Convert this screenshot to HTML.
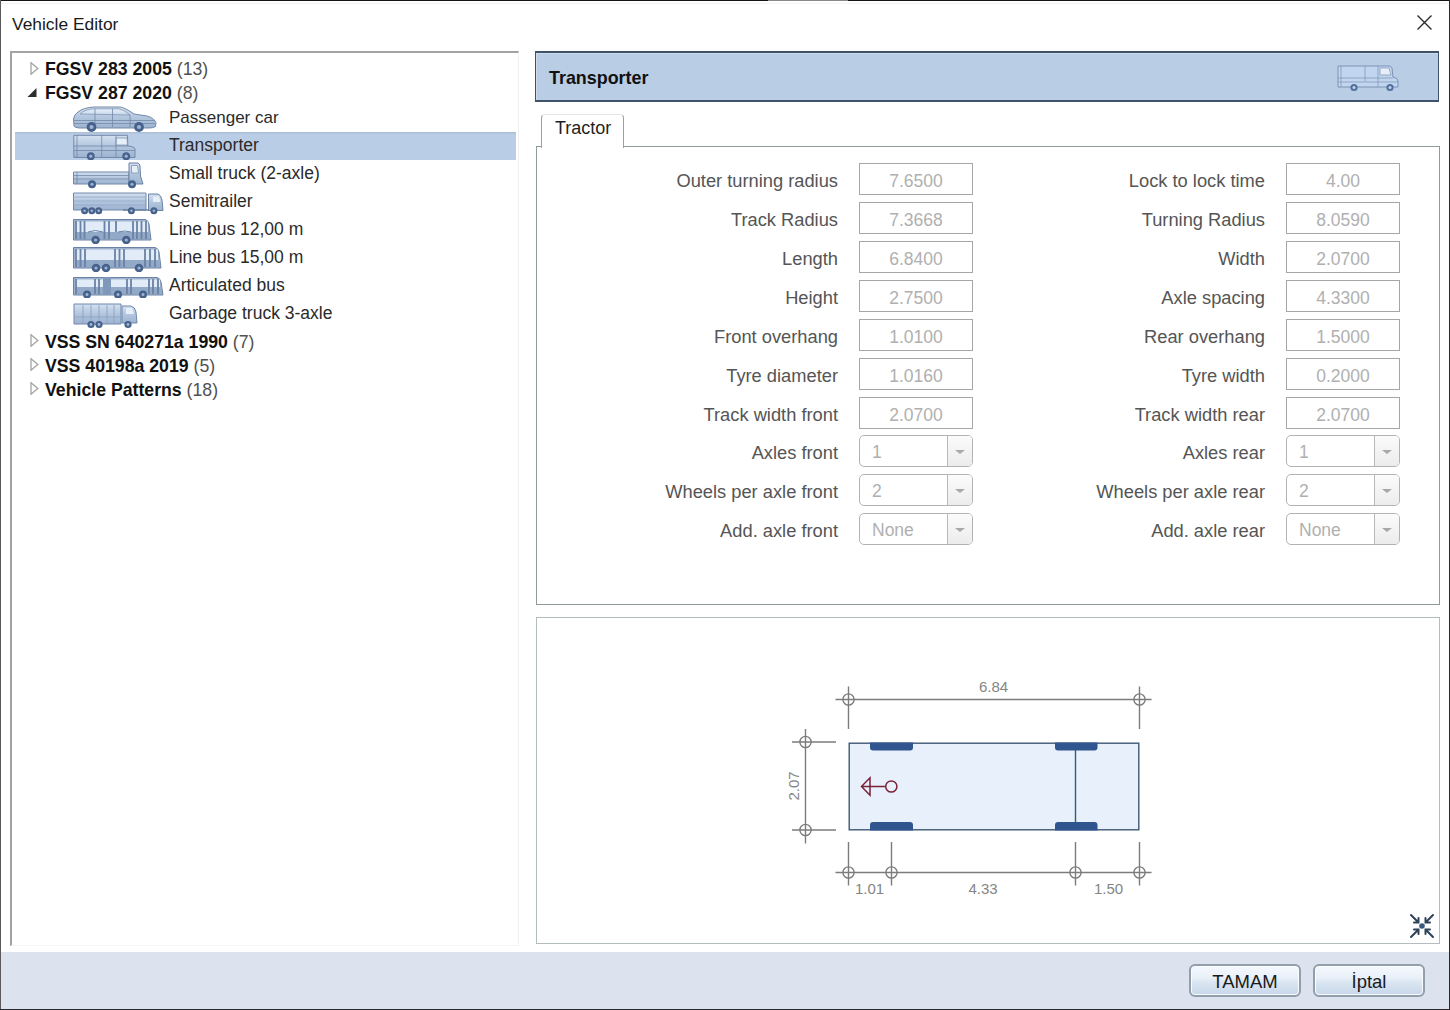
<!DOCTYPE html>
<html><head><meta charset="utf-8">
<style>
html,body{margin:0;padding:0;width:1450px;height:1010px;overflow:hidden;background:#fff;}
body{position:relative;font-family:"Liberation Sans",sans-serif;color:#3a3a3a;}
.a{position:absolute;}
.t{position:absolute;white-space:nowrap;font-size:18px;line-height:22px;}
#frame-top{left:0;top:0;width:1450px;height:1px;background:#151515;}
#frame-left{left:0;top:0;width:1px;height:1010px;background:#5a5a5a;}
#frame-right{left:1449px;top:0;width:1px;height:1010px;background:#2a2a2a;}
#frame-bottom{left:0;top:1009px;width:1450px;height:1px;background:#2a2a2e;}
#title{left:12px;top:13px;font-size:17.4px;color:#1a1a1a;}
#tree{left:10px;top:51px;width:506px;height:892px;border-top:2px solid #a3a3a3;border-left:2px solid #a3a3a3;border-right:1px solid #f0f0f0;border-bottom:1px solid #f6f6f0;}
.ex{position:absolute;}
.grp{position:absolute;left:45px;font-size:17.7px;font-weight:bold;color:#111;white-space:nowrap;line-height:22px;}
.grp span{font-weight:normal;color:#505050;}
.item{position:absolute;left:169px;font-size:17.5px;color:#2a2a2a;white-space:nowrap;line-height:22px;}
#sel{left:15px;top:132px;width:501px;height:28px;background:#bacde6;box-shadow:inset 0 1.5px 0 #adc0d5;}
#hdr{left:535px;top:51px;width:902px;height:47px;border:2px solid #3e5268;border-left-width:1.5px;border-right-width:1.5px;background:#b9cde5;box-shadow:inset 1px 1px 0 #cfdcec;}
#hdr-t{left:549px;top:67px;font-size:17.9px;font-weight:bold;color:#111;}
#tab{left:541px;top:114px;width:81px;height:33px;border:1.3px solid #9aa0a0;border-top-color:#e4e6e6;border-bottom:none;border-radius:4px 4px 0 0;background:#fff;}
#tab-t{left:555px;top:116.5px;font-size:18px;color:#1f1f1f;}
#panel{left:536px;top:146px;width:902px;height:457px;border:1.3px solid #8f9a9a;background:#fff;}
#draw{left:536px;top:617px;width:902px;height:325px;border:1.3px solid #b3bdbd;background:#fff;}
#bar{left:1px;top:952px;width:1448px;height:57px;background:#dce2ee;}
.lbl{position:absolute;font-size:18.3px;color:#555;white-space:nowrap;text-align:right;line-height:22px;}
.fld{position:absolute;width:112px;height:30px;border:1.3px solid #a6a6a6;background:#fff;}
.fld span{position:absolute;left:0;right:0;top:6px;text-align:center;font-size:17.5px;color:#b0b0b0;line-height:22px;}
.cmb{position:absolute;width:112px;height:30px;border:1.3px solid #b3b3b3;border-radius:5px;background:#fff;overflow:hidden;}
.cmb span{position:absolute;left:12px;top:5px;font-size:17.5px;color:#b0b0b0;line-height:22px;}
.cmb i{position:absolute;right:0;top:0;width:24px;height:30px;border-left:1.3px solid #b8b8b8;background:linear-gradient(#fbfbfb,#ececec);}
.cmb i:after{content:"";position:absolute;left:7px;top:14px;border-left:5px solid transparent;border-right:5px solid transparent;border-top:4px solid #a8a8a8;}
.btn{position:absolute;width:108px;height:29px;border:2px solid #939eab;border-radius:6px;background:linear-gradient(#f5f9fd 0%,#e9f0f8 40%,#d8e4f1 60%,#c7d7ea 100%);box-shadow:inset 0 0 0 1px #f8fbff;}
.btn span{position:absolute;left:0;right:0;top:5px;text-align:center;font-size:18.5px;color:#1a1a1a;line-height:22px;}
</style></head>
<body>
<div class="a" id="frame-top"></div>
<div class="a" style="left:1px;top:3px;width:1447px;height:1px;background:#f3f3f3"></div>
<div class="a" style="left:768px;top:0;width:80px;height:1px;background:#8a8a8a"></div>
<div class="a" id="frame-left"></div>
<div class="a" id="frame-right"></div>
<div class="a" id="frame-bottom"></div>

<div class="t" id="title">Vehicle Editor</div>
<svg class="a" style="left:1417px;top:15px" width="15" height="15" viewBox="0 0 15 15"><path d="M0.5 0.5L14.5 14.5M14.5 0.5L0.5 14.5" stroke="#2b2b2b" stroke-width="1.4"/></svg>

<div class="a" id="tree"></div>
<div class="a" id="sel"></div>
<svg width="0" height="0" style="position:absolute"><defs>
<linearGradient id="gb" x1="0" y1="0" x2="0" y2="1"><stop offset="0" stop-color="#d3e0f0"/><stop offset="0.5" stop-color="#b3c6de"/><stop offset="1" stop-color="#9db3d0"/></linearGradient>
<linearGradient id="gw" x1="0" y1="0" x2="0" y2="1"><stop offset="0" stop-color="#e8f0fa"/><stop offset="1" stop-color="#c6d6ea"/></linearGradient>
</defs></svg>
<!-- car -->
<svg class="a" style="left:73px;top:106px" width="84" height="26" viewBox="0 0 84 26">
<path d="M1 20 L0.5 13 Q1 8.5 5 6 Q10 1.5 22 1 L47 1 Q52 1.5 61 8 L74 10 Q81 12 83 16.5 L82.5 20.5 Q80 22 76 22 L6 22 Q1.5 21.5 1 20Z" fill="url(#gb)" stroke="#7289a9" stroke-width="1"/>
<path d="M7 8 Q12 3 22 2.8 L46 2.8 Q51 3.5 57 9 Z" fill="url(#gw)" stroke="#8197b5" stroke-width="0.8"/>
<path d="M22 2.8 V21 M39.5 2.8 V21 M57 9 V21 M1 14.5 H82 M1 17.5 H82" stroke="#7289a9" stroke-width="0.8" fill="none"/>
<circle cx="18.5" cy="21" r="4.9" fill="#46628c"/><circle cx="18.5" cy="21" r="2.1" fill="#9fb4d2"/>
<circle cx="66" cy="21" r="4.9" fill="#46628c"/><circle cx="66" cy="21" r="2.1" fill="#9fb4d2"/>
</svg>
<!-- van -->
<svg class="a" style="left:73px;top:134px" width="63" height="27" viewBox="0 0 63 27">
<path d="M0.8 1.3 L54.5 1.3 L54.8 12 Q61.5 12.5 62 15 L62 23.5 L0.8 23.5 Z" fill="url(#gb)" stroke="#7289a9" stroke-width="1"/>
<path d="M43 4 L54 4 L54.5 11 L43 11 Z" fill="#e6eef8" stroke="#7289a9" stroke-width="0.7"/>
<path d="M4 1.3 V23 M28.7 1.3 V23 M43 1.3 V23 M0.8 12 H55 M0.8 16.5 H62" stroke="#7289a9" stroke-width="0.8" fill="none"/>
<circle cx="17.8" cy="22.2" r="3.9" fill="#46628c"/><circle cx="17.8" cy="22.2" r="1.6" fill="#9fb4d2"/>
<circle cx="53.2" cy="22.2" r="3.9" fill="#46628c"/><circle cx="53.2" cy="22.2" r="1.6" fill="#9fb4d2"/>
</svg>
<!-- small truck -->
<svg class="a" style="left:73px;top:162px" width="71" height="27" viewBox="0 0 71 27">
<path d="M0.5 10 L56 10 L56 22 L0.5 22 Z" fill="url(#gb)" stroke="#7289a9" stroke-width="1"/>
<path d="M56 1 L65 1 Q66.5 1.5 67 4 L67.5 14 L70 22 L56 22 Z" fill="url(#gb)" stroke="#6a82a4" stroke-width="1"/>
<path d="M58.5 3.5 L64.5 3.5 L65.5 11 L58.5 11 Z" fill="#e6eef8" stroke="#7289a9" stroke-width="0.7"/>
<path d="M0.5 13.5 H56 M0.5 17 H56 M4 10 V22" stroke="#7289a9" stroke-width="0.8"/>
<circle cx="19" cy="22.2" r="4" fill="#46628c"/><circle cx="19" cy="22.2" r="1.5" fill="#9fb4d2"/>
<circle cx="59" cy="22.2" r="4" fill="#46628c"/><circle cx="59" cy="22.2" r="1.5" fill="#9fb4d2"/>
</svg>
<!-- semitrailer -->
<svg class="a" style="left:73px;top:192px" width="91" height="23" viewBox="0 0 91 23">
<path d="M0.5 1 L73 1 L73 18 L0.5 18 Z" fill="url(#gb)" stroke="#7289a9" stroke-width="1"/>
<path d="M0.5 5 H73 M0.5 9 H73 M0.5 13 H73" stroke="#8ea4c3" stroke-width="0.7"/>
<path d="M75.5 2 L85 2 Q88 3 89 8 L90 18.5 L75.5 18.5 Z" fill="url(#gb)" stroke="#6a82a4" stroke-width="1"/>
<path d="M80 4.5 L86 4.5 L87.5 10 L80 10 Z" fill="#e6eef8"/>
<path d="M50 18 H76" stroke="#6a82a4" stroke-width="1.5"/>
<circle cx="11.6" cy="18.8" r="3.5" fill="#46628c"/><circle cx="18.8" cy="18.8" r="3.5" fill="#46628c"/><circle cx="25.7" cy="18.8" r="3.5" fill="#46628c"/>
<circle cx="58.4" cy="18.8" r="3.5" fill="#46628c"/><circle cx="80.9" cy="18.8" r="3.5" fill="#46628c"/>
<circle cx="11.6" cy="18.8" r="1.3" fill="#9fb4d2"/><circle cx="18.8" cy="18.8" r="1.3" fill="#9fb4d2"/><circle cx="25.7" cy="18.8" r="1.3" fill="#9fb4d2"/><circle cx="58.4" cy="18.8" r="1.3" fill="#9fb4d2"/><circle cx="80.9" cy="18.8" r="1.3" fill="#9fb4d2"/>
</svg>
<!-- bus 12 -->
<svg class="a" style="left:73px;top:218px" width="79" height="26" viewBox="0 0 79 26">
<path d="M0.5 1.5 L72 1.5 Q75 2 76 6 L78 22 L0.5 22 Z" fill="#9fb3cf" stroke="#6a82a4" stroke-width="1"/>
<path d="M2 3.5 H75 V14 H2 Z" fill="#e2ecf8"/>
<path d="M2 14 H77 V21 H2Z" fill="#93a9c8"/>
<path d="M3 3 V21 M7.5 3 V21 M11.5 3 V21 M31.5 3 V21 M36 3 V21 M43 3 V14 M60 3 V21 M64 3 V21 M68.5 3 V21 M73 3 V21" stroke="#6a82a4" stroke-width="1.8"/>
<path d="M15 14 Q22 11 30 14 M45 14 Q52 12 58 14" stroke="#6a82a4" stroke-width="1" fill="none"/>
<circle cx="22.6" cy="22" r="4.3" fill="#46628c"/><circle cx="22.6" cy="22" r="1.6" fill="#9fb4d2"/>
<circle cx="53.3" cy="22" r="4.3" fill="#46628c"/><circle cx="53.3" cy="22" r="1.6" fill="#9fb4d2"/>
</svg>
<!-- bus 15 -->
<svg class="a" style="left:73px;top:246px" width="89" height="26" viewBox="0 0 89 26">
<path d="M0.5 1.5 L82 1.5 Q85 2 86 6 L88 22 L0.5 22 Z" fill="#9fb3cf" stroke="#6a82a4" stroke-width="1"/>
<path d="M2 3.5 H85 V14 H2 Z" fill="#e2ecf8"/>
<path d="M2 14 H87 V21 H2Z" fill="#93a9c8"/>
<path d="M3 3 V21 M7.5 3 V21 M12 3 V21 M42 3 V21 M46.5 3 V21 M51 3 V21 M72 3 V21 M77 3 V21 M82 3 V21" stroke="#6a82a4" stroke-width="1.8"/>
<circle cx="23" cy="22" r="4.3" fill="#46628c"/><circle cx="23" cy="22" r="1.6" fill="#9fb4d2"/>
<circle cx="33" cy="22" r="4.3" fill="#46628c"/><circle cx="33" cy="22" r="1.6" fill="#9fb4d2"/>
<circle cx="66" cy="22" r="4.3" fill="#46628c"/><circle cx="66" cy="22" r="1.6" fill="#9fb4d2"/>
</svg>
<!-- articulated -->
<svg class="a" style="left:73px;top:276px" width="91" height="22" viewBox="0 0 91 22">
<path d="M0.5 1.5 L84 1.5 Q87 2 88 6 L90 19 L0.5 19 Z" fill="#9fb3cf" stroke="#6a82a4" stroke-width="1"/>
<path d="M2 3.5 H87 V11 H2 Z" fill="#e2ecf8"/>
<path d="M2 11 H89 V18 H2Z" fill="#93a9c8"/>
<path d="M3 3 V18 M22 3 V18 M26 3 V18 M54 3 V18 M58 3 V18 M76 3 V18 M80 3 V18 M85 3 V18" stroke="#6a82a4" stroke-width="1.8"/>
<rect x="30" y="1" width="8" height="18" fill="#7f97b9"/>
<circle cx="14" cy="18.5" r="4" fill="#46628c"/><circle cx="14" cy="18.5" r="1.5" fill="#9fb4d2"/>
<circle cx="45" cy="18.5" r="4" fill="#46628c"/><circle cx="45" cy="18.5" r="1.5" fill="#9fb4d2"/>
<circle cx="70" cy="18.5" r="4" fill="#46628c"/><circle cx="70" cy="18.5" r="1.5" fill="#9fb4d2"/>
</svg>
<!-- garbage -->
<svg class="a" style="left:73px;top:302px" width="65" height="27" viewBox="0 0 65 27">
<path d="M1 2 L48 2 L48 22 L1 22 Z" fill="url(#gb)" stroke="#6f89ad" stroke-width="1"/>
<path d="M10 3 V21 M18 3 V21 M26 3 V21 M34 3 V21 M41 3 V21 M1 15 H48" stroke="#8ea4c3" stroke-width="0.9"/>
<path d="M49 4 L58 4 Q62 5 63 10 L64 21 L49 21 Z" fill="url(#gb)" stroke="#6f89ad" stroke-width="1"/>
<path d="M53 6 L59 6 L61 12 L53 12 Z" fill="#e6eef8"/>
<circle cx="18" cy="22.5" r="3.6" fill="#46628c"/><circle cx="18" cy="22.5" r="1.4" fill="#9fb4d2"/>
<circle cx="26" cy="22.5" r="3.6" fill="#46628c"/><circle cx="26" cy="22.5" r="1.4" fill="#9fb4d2"/>
<circle cx="55" cy="22.5" r="3.6" fill="#46628c"/><circle cx="55" cy="22.5" r="1.4" fill="#9fb4d2"/>
</svg>


<svg class="a" style="left:30px;top:62px" width="9" height="13" viewBox="0 0 9 13"><path d="M1 0.8L7.8 6.5L1 12.2Z" fill="none" stroke="#a2a2a2" stroke-width="1.3"/></svg>
<div class="grp" style="top:58px">FGSV 283 2005 <span>(13)</span></div>
<svg class="a" style="left:27px;top:87px" width="11" height="11" viewBox="0 0 11 11"><path d="M0.5 10L9.5 1V10Z" fill="#2e2e2e"/></svg>
<div class="grp" style="top:82px">FGSV 287 2020 <span>(8)</span></div>
<div class="item" style="top:107px;font-size:17px">Passenger car</div>
<div class="item" style="top:134px">Transporter</div>
<div class="item" style="top:162px">Small truck (2-axle)</div>
<div class="item" style="top:190px">Semitrailer</div>
<div class="item" style="top:218px">Line bus 12,00 m</div>
<div class="item" style="top:246px">Line bus 15,00 m</div>
<div class="item" style="top:274px">Articulated bus</div>
<div class="item" style="top:302px">Garbage truck 3-axle</div>
<svg class="a" style="left:30px;top:334px" width="9" height="13" viewBox="0 0 9 13"><path d="M1 0.8L7.8 6.5L1 12.2Z" fill="none" stroke="#a2a2a2" stroke-width="1.3"/></svg>
<div class="grp" style="top:331px">VSS SN 640271a 1990 <span>(7)</span></div>
<svg class="a" style="left:30px;top:358px" width="9" height="13" viewBox="0 0 9 13"><path d="M1 0.8L7.8 6.5L1 12.2Z" fill="none" stroke="#a2a2a2" stroke-width="1.3"/></svg>
<div class="grp" style="top:355px">VSS 40198a 2019 <span>(5)</span></div>
<svg class="a" style="left:30px;top:382px" width="9" height="13" viewBox="0 0 9 13"><path d="M1 0.8L7.8 6.5L1 12.2Z" fill="none" stroke="#a2a2a2" stroke-width="1.3"/></svg>
<div class="grp" style="top:379px">Vehicle Patterns <span>(18)</span></div>


<div class="a" id="hdr"></div>
<div class="t" id="hdr-t">Transporter</div>
<!-- header van icon -->
<svg class="a" style="left:1337px;top:65px" width="63" height="28" viewBox="0 0 63 28">
<path d="M1 1 L52 1 Q54 1 55 3 L56 12 Q61 13 61 16 L61 22 L1 22 Z" fill="#c2d5ee" stroke="#7a93b5" stroke-width="1"/>
<path d="M43 3 L52 3 L54 10 L43 10 Z" fill="#e6eef8" stroke="#7a93b5" stroke-width="0.7"/>
<path d="M4 1 V22 M28 1 V16 M41 1 V22 M1 13 H56 M1 17 H61" stroke="#7a93b5" stroke-width="0.7" fill="none"/>
<circle cx="17" cy="22.5" r="3.6" fill="#52709c"/><circle cx="17" cy="22.5" r="1.5" fill="#c2d5ee"/>
<circle cx="53" cy="22.5" r="3.6" fill="#52709c"/><circle cx="53" cy="22.5" r="1.5" fill="#c2d5ee"/>
</svg>

<div class="a" id="panel"></div>
<div class="a" id="tab"></div>
<div class="t" id="tab-t">Tractor</div>
<div class="lbl" style="right:612px;top:170px">Outer turning radius</div><div class="fld" style="left:859px;top:163px"><span>7.6500</span></div>
<div class="lbl" style="right:612px;top:209px">Track Radius</div><div class="fld" style="left:859px;top:202px"><span>7.3668</span></div>
<div class="lbl" style="right:612px;top:248px">Length</div><div class="fld" style="left:859px;top:241px"><span>6.8400</span></div>
<div class="lbl" style="right:612px;top:287px">Height</div><div class="fld" style="left:859px;top:280px"><span>2.7500</span></div>
<div class="lbl" style="right:612px;top:326px">Front overhang</div><div class="fld" style="left:859px;top:319px"><span>1.0100</span></div>
<div class="lbl" style="right:612px;top:365px">Tyre diameter</div><div class="fld" style="left:859px;top:358px"><span>1.0160</span></div>
<div class="lbl" style="right:612px;top:404px">Track width front</div><div class="fld" style="left:859px;top:397px"><span>2.0700</span></div>
<div class="lbl" style="right:185px;top:170px">Lock to lock time</div><div class="fld" style="left:1286px;top:163px"><span>4.00</span></div>
<div class="lbl" style="right:185px;top:209px">Turning Radius</div><div class="fld" style="left:1286px;top:202px"><span>8.0590</span></div>
<div class="lbl" style="right:185px;top:248px">Width</div><div class="fld" style="left:1286px;top:241px"><span>2.0700</span></div>
<div class="lbl" style="right:185px;top:287px">Axle spacing</div><div class="fld" style="left:1286px;top:280px"><span>4.3300</span></div>
<div class="lbl" style="right:185px;top:326px">Rear overhang</div><div class="fld" style="left:1286px;top:319px"><span>1.5000</span></div>
<div class="lbl" style="right:185px;top:365px">Tyre width</div><div class="fld" style="left:1286px;top:358px"><span>0.2000</span></div>
<div class="lbl" style="right:185px;top:404px">Track width rear</div><div class="fld" style="left:1286px;top:397px"><span>2.0700</span></div>
<div class="lbl" style="right:612px;top:442px">Axles front</div><div class="cmb" style="left:859px;top:435px"><span>1</span><i></i></div>
<div class="lbl" style="right:612px;top:481px">Wheels per axle front</div><div class="cmb" style="left:859px;top:474px"><span>2</span><i></i></div>
<div class="lbl" style="right:612px;top:520px">Add. axle front</div><div class="cmb" style="left:859px;top:513px"><span>None</span><i></i></div>
<div class="lbl" style="right:185px;top:442px">Axles rear</div><div class="cmb" style="left:1286px;top:435px"><span>1</span><i></i></div>
<div class="lbl" style="right:185px;top:481px">Wheels per axle rear</div><div class="cmb" style="left:1286px;top:474px"><span>2</span><i></i></div>
<div class="lbl" style="right:185px;top:520px">Add. axle rear</div><div class="cmb" style="left:1286px;top:513px"><span>None</span><i></i></div>

<div class="a" id="draw"></div>
<svg class="a" style="left:0;top:0" width="1450" height="1010" viewBox="0 0 1450 1010">
<g stroke="#7c7c7c" stroke-width="1.4" fill="none">
<path d="M835.5 699.5H1151.5M848.5 686.5V729M1139.5 686.5V729"/>
<circle cx="848.5" cy="699.5" r="5.6"/><circle cx="1139.5" cy="699.5" r="5.6"/>
<path d="M805.5 729V843.5M792 742H836M792 830H836"/>
<circle cx="805.5" cy="742" r="5.6"/><circle cx="805.5" cy="830" r="5.6"/>
<path d="M835.5 872.5H1151.5M848.5 842V885.5M891.5 842V885.5M1075.5 842V885.5M1139.5 842V885.5"/>
<circle cx="848.5" cy="872.5" r="5.6"/><circle cx="891.5" cy="872.5" r="5.6"/><circle cx="1075.5" cy="872.5" r="5.6"/><circle cx="1139.5" cy="872.5" r="5.6"/>
</g>
<rect x="849.2" y="743.2" width="289.6" height="86.6" fill="#e7f0fb" stroke="#3f5874" stroke-width="1.4"/>
<path d="M1075.5 746V826" stroke="#3f5874" stroke-width="1.4"/>
<path d="M870 742.5H913V747.5Q913 750.5 910 750.5H873Q870 750.5 870 747.5Z" fill="#30558f"/>
<path d="M870 830.5H913V825Q913 822 910 822H873Q870 822 870 825Z" fill="#30558f"/>
<path d="M1055 742.5H1097.5V747.5Q1097.5 750.5 1094.5 750.5H1058Q1055 750.5 1055 747.5Z" fill="#30558f"/>
<path d="M1055 830.5H1097.5V825Q1097.5 822 1094.5 822H1058Q1055 822 1055 825Z" fill="#30558f"/>
<g stroke="#7a2236" stroke-width="1.5" fill="none">
<path d="M861.5 786.5L870 777.8V795.2Z M861.5 786.5H885.5"/>
<circle cx="891.3" cy="786.5" r="5.6"/>
</g>
<g font-family="Liberation Sans" font-size="15" fill="#858585">
<text x="993.5" y="691.5" text-anchor="middle">6.84</text>
<text x="869.5" y="893.5" text-anchor="middle">1.01</text>
<text x="983" y="893.5" text-anchor="middle">4.33</text>
<text x="1108.5" y="893.5" text-anchor="middle">1.50</text>
<text x="0" y="0" text-anchor="middle" transform="translate(798.5 786) rotate(-90)">2.07</text>
</g>
<!-- fit icon -->
<g stroke="#2e4259" stroke-width="2" fill="none" stroke-linecap="round" stroke-linejoin="miter">
<path d="M1411 915L1418.5 922.5M1418.5 918V922.5H1414"/>
<path d="M1433 915L1425.5 922.5M1425.5 918V922.5H1430"/>
<path d="M1411 937L1418.5 929.5M1418.5 934V929.5H1414"/>
<path d="M1433 937L1425.5 929.5M1425.5 934V929.5H1430"/>
</g>
<circle cx="1422" cy="926" r="2.8" fill="#395a7e"/>
</svg>


<div class="a" id="bar"></div>
<div class="btn" style="left:1189px;top:964px"><span>TAMAM</span></div>
<div class="btn" style="left:1313px;top:964px"><span>İptal</span></div>

</body></html>
